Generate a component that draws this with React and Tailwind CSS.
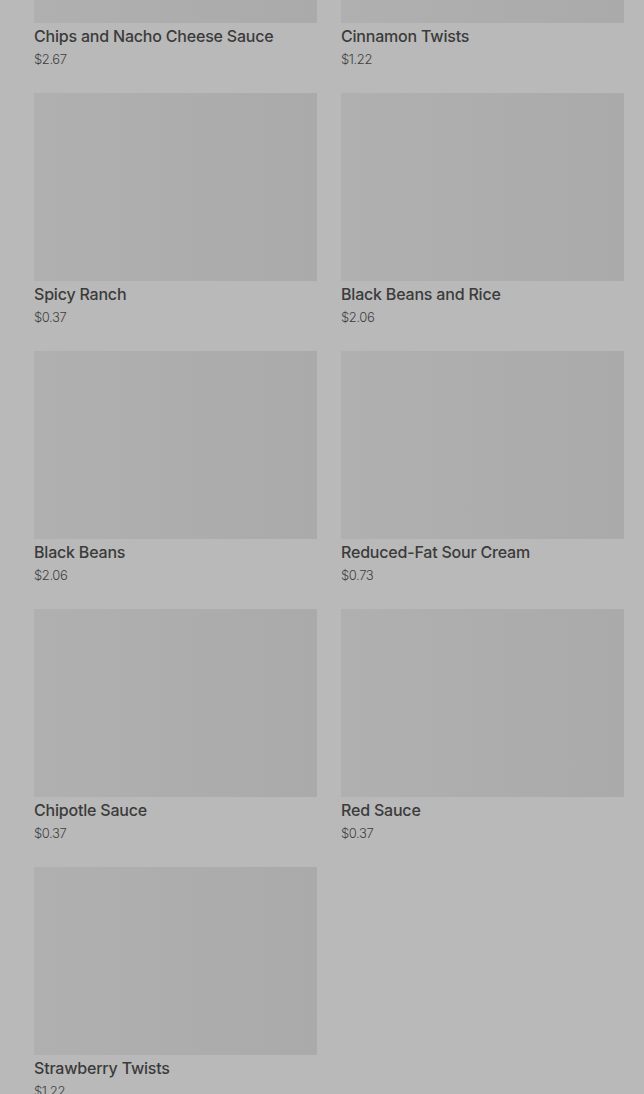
import React from "react";

const items = [
  ["Chips and Nacho Cheese Sauce", "$2.67"],
  ["Cinnamon Twists", "$1.22"],
  ["Spicy Ranch", "$0.37"],
  ["Black Beans and Rice", "$2.06"],
  ["Black Beans", "$2.06"],
  ["Reduced-Fat Sour Cream", "$0.73"],
  ["Chipotle Sauce", "$0.37"],
  ["Red Sauce", "$0.37"],
  ["Strawberry Twists", "$1.22"],
];

export default function App() {
  return (
    <div
      className="h-[1094px] overflow-hidden bg-[#b9b9b9] text-[#3b3b3b]"
      style={{ fontFamily: "Inter, 'Noto Sans', sans-serif" }}
    >
      <div className="mt-[-165px] pl-[34px] pr-[20px] grid grid-cols-2 gap-x-[24px] gap-y-[23px]">
        {items.map(([name, price]) => (
          <div key={name} className="flex flex-col">
            <div className="h-[188px] bg-gradient-to-r from-[#b0b0b0] to-[#aaaaaa]" />
            <div className="mt-[1px] h-[24px] leading-[24px] text-[16px] font-medium tracking-[-0.2px]">
              {name}
            </div>
            <div className="h-[22px] leading-[22px] text-[13px] font-light tracking-[-0.4px] text-[#3f3f3f]">
              {price}
            </div>
          </div>
        ))}
      </div>
    </div>
  );
}
